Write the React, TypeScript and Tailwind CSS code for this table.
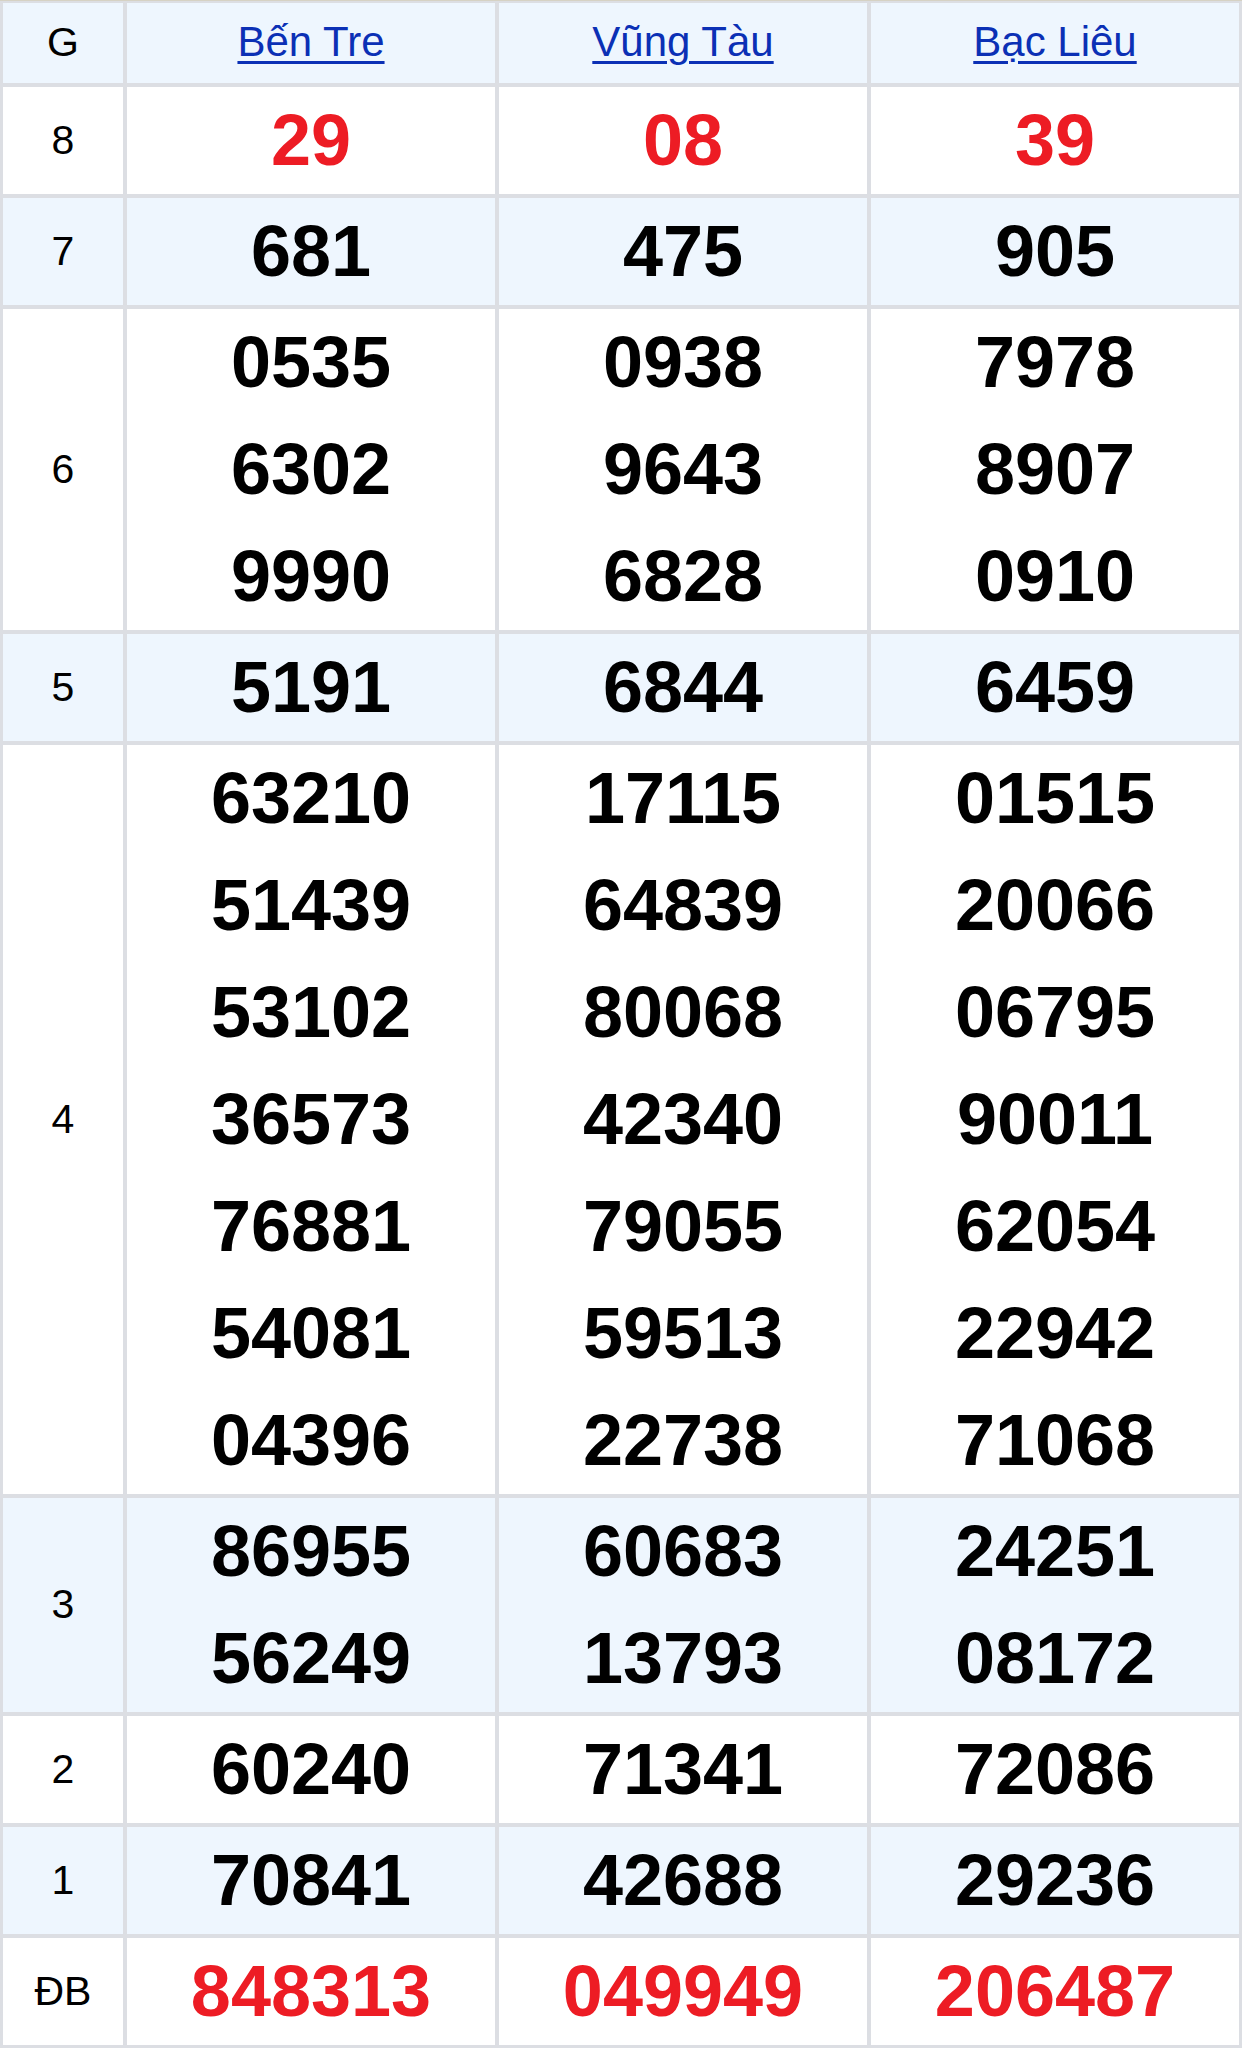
import React from "react";

type Row = { label: string; values: string[][]; red?: boolean };

const provinces = ["Bến Tre", "Vũng Tàu", "Bạc Liêu"];

const rows: Row[] = [
  { label: "8", values: [["29"], ["08"], ["39"]], red: true },
  { label: "7", values: [["681"], ["475"], ["905"]] },
  {
    label: "6",
    values: [
      ["0535", "6302", "9990"],
      ["0938", "9643", "6828"],
      ["7978", "8907", "0910"],
    ],
  },
  { label: "5", values: [["5191"], ["6844"], ["6459"]] },
  {
    label: "4",
    values: [
      ["63210", "51439", "53102", "36573", "76881", "54081", "04396"],
      ["17115", "64839", "80068", "42340", "79055", "59513", "22738"],
      ["01515", "20066", "06795", "90011", "62054", "22942", "71068"],
    ],
  },
  {
    label: "3",
    values: [
      ["86955", "56249"],
      ["60683", "13793"],
      ["24251", "08172"],
    ],
  },
  { label: "2", values: [["60240"], ["71341"], ["72086"]] },
  { label: "1", values: [["70841"], ["42688"], ["29236"]] },
  { label: "ĐB", values: [["848313"], ["049949"], ["206487"]], red: true },
];

export default function App() {
  return (
    <div className="w-[1242px] bg-white font-['Liberation_Sans',Arial,sans-serif]">
      <div className="grid grid-cols-[120px_368px_368px_368px] gap-[4px] border-t border-[#d6d2c4] bg-[#dcdee3] px-[3px] pt-[2px] pb-[3px]">
        {/* header */}
        <div className="flex h-[80px] items-center justify-center bg-[#eef6fe] text-[41px] text-black">
          G
        </div>
        {provinces.map((p) => (
          <div key={p} className="flex h-[80px] items-center justify-center bg-[#eef6fe] pb-[2px]">
            <a href="#" className="text-[42px] leading-none text-[#0b30b5] underline decoration-[3px] underline-offset-[5px]">
              {p}
            </a>
          </div>
        ))}

        {rows.map((r, i) => {
          const bg = i % 2 === 0 ? "bg-white" : "bg-[#eef6fe]";
          return (
            <React.Fragment key={r.label}>
              <div className={`flex items-center justify-center text-[41px] text-black ${bg}`}>
                {r.label}
              </div>
              {r.values.map((col, j) => (
                <div key={j} className={`flex flex-col items-center ${bg}`}>
                  {col.map((n, k) => (
                    <div
                      key={k}
                      className={`text-[72px] font-bold leading-[107px] ${r.red ? "text-[#ed1c24]" : "text-black"}`}
                    >
                      {n}
                    </div>
                  ))}
                </div>
              ))}
            </React.Fragment>
          );
        })}
      </div>
    </div>
  );
}
